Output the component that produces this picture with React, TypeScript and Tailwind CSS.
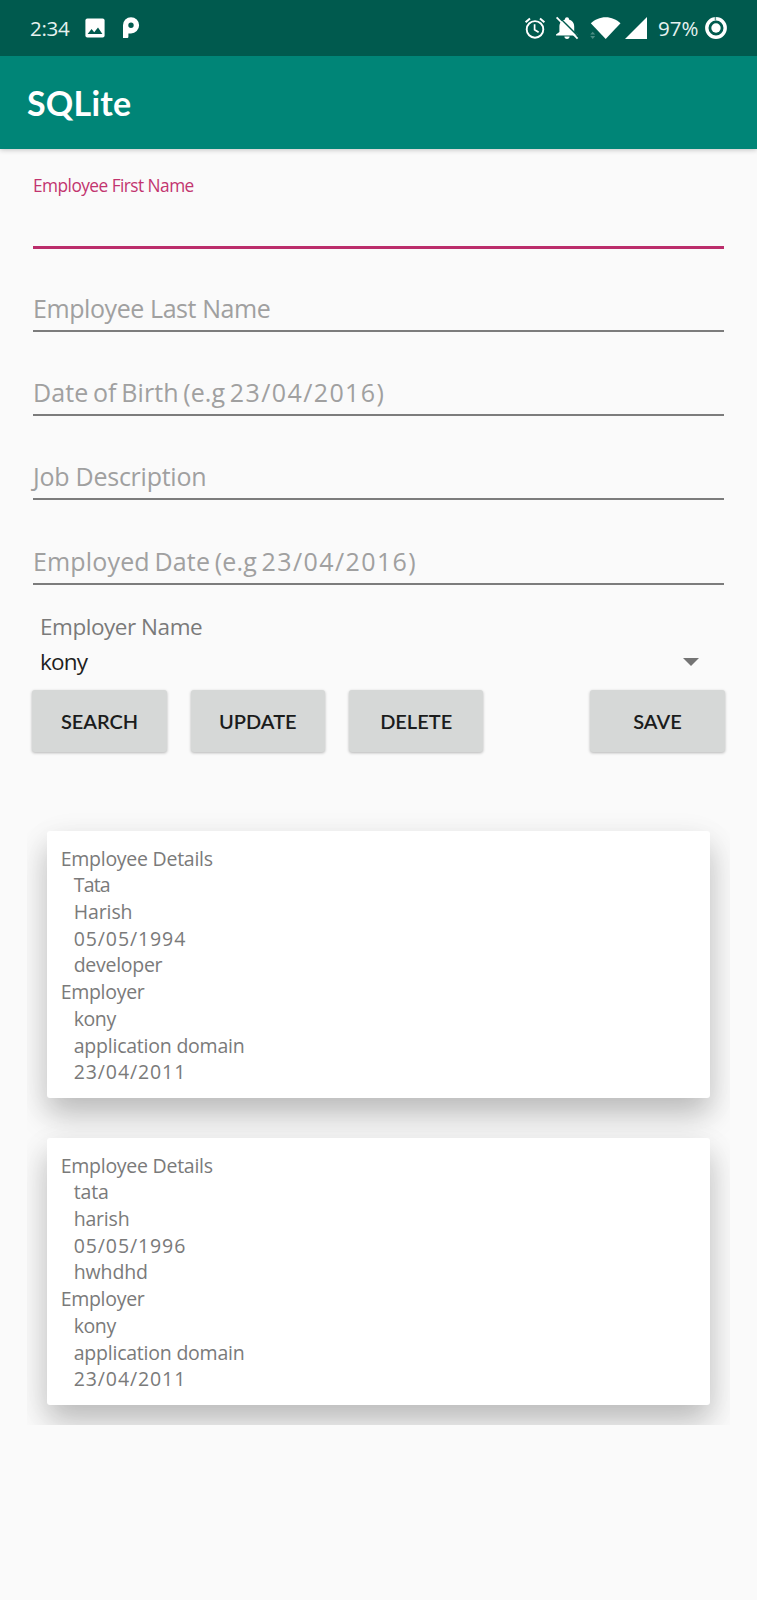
function ImageIcon() {
  return (
    <svg className="block h-5 w-5 shrink-0" viewBox="0 0 20 20" fill="none">
      <rect x="0.4" y="0.4" width="19.2" height="19.2" rx="2" fill="#fff" />
      <path d="M2.6 16 6.6 11l2.6 3.2L13 9.4 17.4 16z" fill="#005a4e" />
    </svg>
  );
}

function AppBadgeIcon() {
  return (
    <svg className="block h-[22px] w-[18px] shrink-0" viewBox="0 0 18 22">
      <path
        fill="#fff"
        fillRule="evenodd"
        d="M9 .2a8 8 0 0 1 0 16.2H6.4v3.4c0 .7-.5 1.3-1.4 1.3H1V8.2A8 8 0 0 1 9 .2Zm0 5.3a2.7 2.7 0 0 0 0 5.4 2.7 2.7 0 0 0 0-5.4Z"
      />
    </svg>
  );
}

function AlarmIcon() {
  return (
    <svg className="block h-[22px] w-[22px] shrink-0" viewBox="0 0 22 22" fill="none" stroke="#fff">
      <circle cx="11" cy="12.4" r="8.3" strokeWidth="1.9" />
      <path d="M10.6 7.2v5.6l4 2.4" strokeWidth="1.7" />
      <path d="M1.6 5.2 6 1.4M20.4 5.2 16 1.4" strokeWidth="2" />
    </svg>
  );
}

function BellOffIcon() {
  return (
    <svg className="block h-6 w-6 shrink-0" viewBox="0 0 24 24">
      <path
        d="M12 1.2c1.2 0 2 .8 2 1.9v.5c3.2.8 5.2 3.6 5.2 7v5.4l3.2 2.6v.9H1v-.9l3.4-2.6v-5.4c0-3.4 2.2-6.2 5.6-7v-.5c0-1.1.8-1.9 2-1.9Z"
        fill="#fff"
      />
      <path d="M9.4 20.6h5.2c0 1.4-1.1 2.4-2.6 2.4s-2.6-1-2.6-2.4Z" fill="#fff" />
      <path d="M3.2.3 24.2 21.3" stroke="#005a4e" strokeWidth="1.5" />
      <path d="M1.6 1.4 22.6 22.7" stroke="#fff" strokeWidth="1.8" />
    </svg>
  );
}

function WifiIcon() {
  return (
    <svg className="block h-[22px] w-[31px] shrink-0" viewBox="0 0 31 22">
      <path d="M.8 6.3C4.6 2.5 10 .2 15.7.2s11 2.3 14.8 6.1L15.7 21.9Z" fill="#fff" />
      <path d="M.2 19 2.7 21.9 5.2 19ZM.2 17.5 2.7 14.7 5.2 17.5Z" fill="#4b8c83" />
    </svg>
  );
}

function SignalIcon() {
  return (
    <svg className="block h-[22px] w-[22px] shrink-0" viewBox="0 0 22 22">
      <path d="M22 0v22H0Z" fill="#fff" />
    </svg>
  );
}

function BatteryIcon() {
  return (
    <svg className="block h-[22px] w-[22px] shrink-0" viewBox="0 0 22 22" fill="none">
      <circle cx="11" cy="11" r="9.2" stroke="#fff" strokeWidth="3.4" />
      <path d="M10.4 0v3.6" stroke="#5f978f" strokeWidth="1.4" />
      <circle cx="11" cy="11" r="4.7" fill="#fff" />
    </svg>
  );
}

const fields = [
  { label: "Employee Last Name", date: "", box: "h-[83px]", text: "tracking-[-0.42px]" },
  {
    label: "Date of Birth (e.g ",
    date: "23/04/2016)",
    box: "h-[84px]",
    text: "tracking-[0.1px] [word-spacing:-2px]",
  },
  { label: "Job Description", date: "", box: "h-[84px]", text: "tracking-[-0.25px]" },
  {
    label: "Employed Date (e.g ",
    date: "23/04/2016)",
    box: "h-[85px]",
    text: "tracking-[0.16px] [word-spacing:-2px]",
  },
];

type Line = { text: string; style: string };

const heading: Line = { text: "Employee Details", style: "tracking-[-0.26px]" };
const employer: Line[] = [
  { text: "Employer", style: "tracking-[-0.3px]" },
  { text: "kony", style: "ml-[13px] tracking-[-0.4px]" },
  { text: "application domain", style: "ml-[13px] tracking-[-0.22px]" },
  { text: "23/04/2011", style: "ml-[13px] tracking-[0.9px]" },
];

const records: Line[][] = [
  [
    heading,
    { text: "Tata", style: "ml-[13px] tracking-[-0.8px]" },
    { text: "Harish", style: "ml-[13px] tracking-[-0.1px]" },
    { text: "05/05/1994", style: "ml-[13px] tracking-[0.9px]" },
    { text: "developer", style: "ml-[13px] tracking-[-0.28px]" },
    ...employer,
  ],
  [
    heading,
    { text: "tata", style: "ml-[13px] tracking-[-0.1px]" },
    { text: "harish", style: "ml-[13px] tracking-[-0.2px]" },
    { text: "05/05/1996", style: "ml-[13px] tracking-[0.9px]" },
    { text: "hwhdhd", style: "ml-[13px] tracking-[-0.1px]" },
    ...employer,
  ],
];

function ActionButton({ label, className = "" }: { label: string; className?: string }) {
  return (
    <button
      className={`h-[62px] w-[134.5px] rounded-[3px] bg-[#d6d8d7] font-['Lato',sans-serif] text-[20px] leading-[61px] font-semibold text-[#1b1c1c] shadow-[0_1px_3px_rgba(0,0,0,0.28)] ${className}`}
    >
      {label}
    </button>
  );
}

export default function App() {
  return (
    <div className="flex h-[1600px] w-[757px] flex-col overflow-hidden bg-[#fafafa] font-['Open_Sans',sans-serif] whitespace-nowrap">
      <header className="shadow-[0_1px_5px_rgba(0,0,0,0.22)]">
        <div className="flex h-14 items-center bg-[#005a4e] pr-[30px] pl-[30px] text-[20.5px] text-[#e6f2f0]">
          <span className="w-[55px] tracking-[-0.3px]">2:34</span>
          <ImageIcon />
          <span className="ml-[17px]">
            <AppBadgeIcon />
          </span>
          <div className="ml-auto flex items-center">
            <AlarmIcon />
            <span className="ml-[9px]">
              <BellOffIcon />
            </span>
            <span className="ml-[11px]">
              <WifiIcon />
            </span>
            <span className="ml-1">
              <SignalIcon />
            </span>
            <span className="ml-[11px] w-[47px]">97%</span>
            <BatteryIcon />
          </div>
        </div>
        <div className="flex h-[93px] items-center bg-[#008577] pl-[27px]">
          <h1 className="pt-px font-['Lato',sans-serif] text-[34px] leading-[94px] font-bold tracking-[0.2px] text-white">
            SQLite
          </h1>
        </div>
      </header>

      <main className="pr-[33px] pl-[33px]">
        <div className="h-[100px] border-b-3 border-[#bb2d6b] pt-[24px]">
          <label className="block text-[17.3px] leading-[26px] tracking-[-0.54px] text-[#c2346f]">
            Employee First Name
          </label>
        </div>
        {fields.map((f) => (
          <div key={f.label} className={`flex flex-col justify-end border-b-2 border-[#7c7c7c] ${f.box}`}>
            <span className={`block text-[25px] leading-[44px] text-[#a0a0a0] ${f.text}`}>
              {f.label}
              {f.date && <span className="tracking-[1.4px]">{f.date}</span>}
            </span>
          </div>
        ))}

        <div className="mt-[24px] pl-[7px] text-[22.5px]">
          <div className="leading-[35px] tracking-[-0.46px] text-[#7a7a7a]">Employer Name</div>
          <div className="flex items-center justify-between pr-[25px] leading-[35px] text-[#1e1e1e]">
            <span className="tracking-[-0.8px]">kony</span>
            <svg className="h-2 w-4" viewBox="0 0 16 8">
              <path d="M0 0h16L8 8Z" fill="#747474" />
            </svg>
          </div>
        </div>

        <div className="mt-[11px] -mr-[0.7px] -ml-[0.7px] flex gap-[23.8px]">
          <ActionButton label="SEARCH" />
          <ActionButton label="UPDATE" />
          <ActionButton label="DELETE" />
          <ActionButton label="SAVE" className="ml-auto" />
        </div>
      </main>

      <section className="mx-[27px] mt-[58px] flex flex-col gap-[40.5px] overflow-hidden px-5 pt-[21px] pb-5">
        {records.map((lines, i) => (
          <article
            key={i}
            className="h-[266.5px] rounded-[3px] bg-white pt-[14.6px] pl-[13.7px] text-[19.5px] leading-[26.7px] text-[#7a7a7a] shadow-[0_17px_30px_rgba(0,0,0,0.22),0_8px_36px_rgba(0,0,0,0.06)]"
          >
            {lines.map((line) => (
              <p key={line.text} className={line.style}>
                {line.text}
              </p>
            ))}
          </article>
        ))}
      </section>
    </div>
  );
}
